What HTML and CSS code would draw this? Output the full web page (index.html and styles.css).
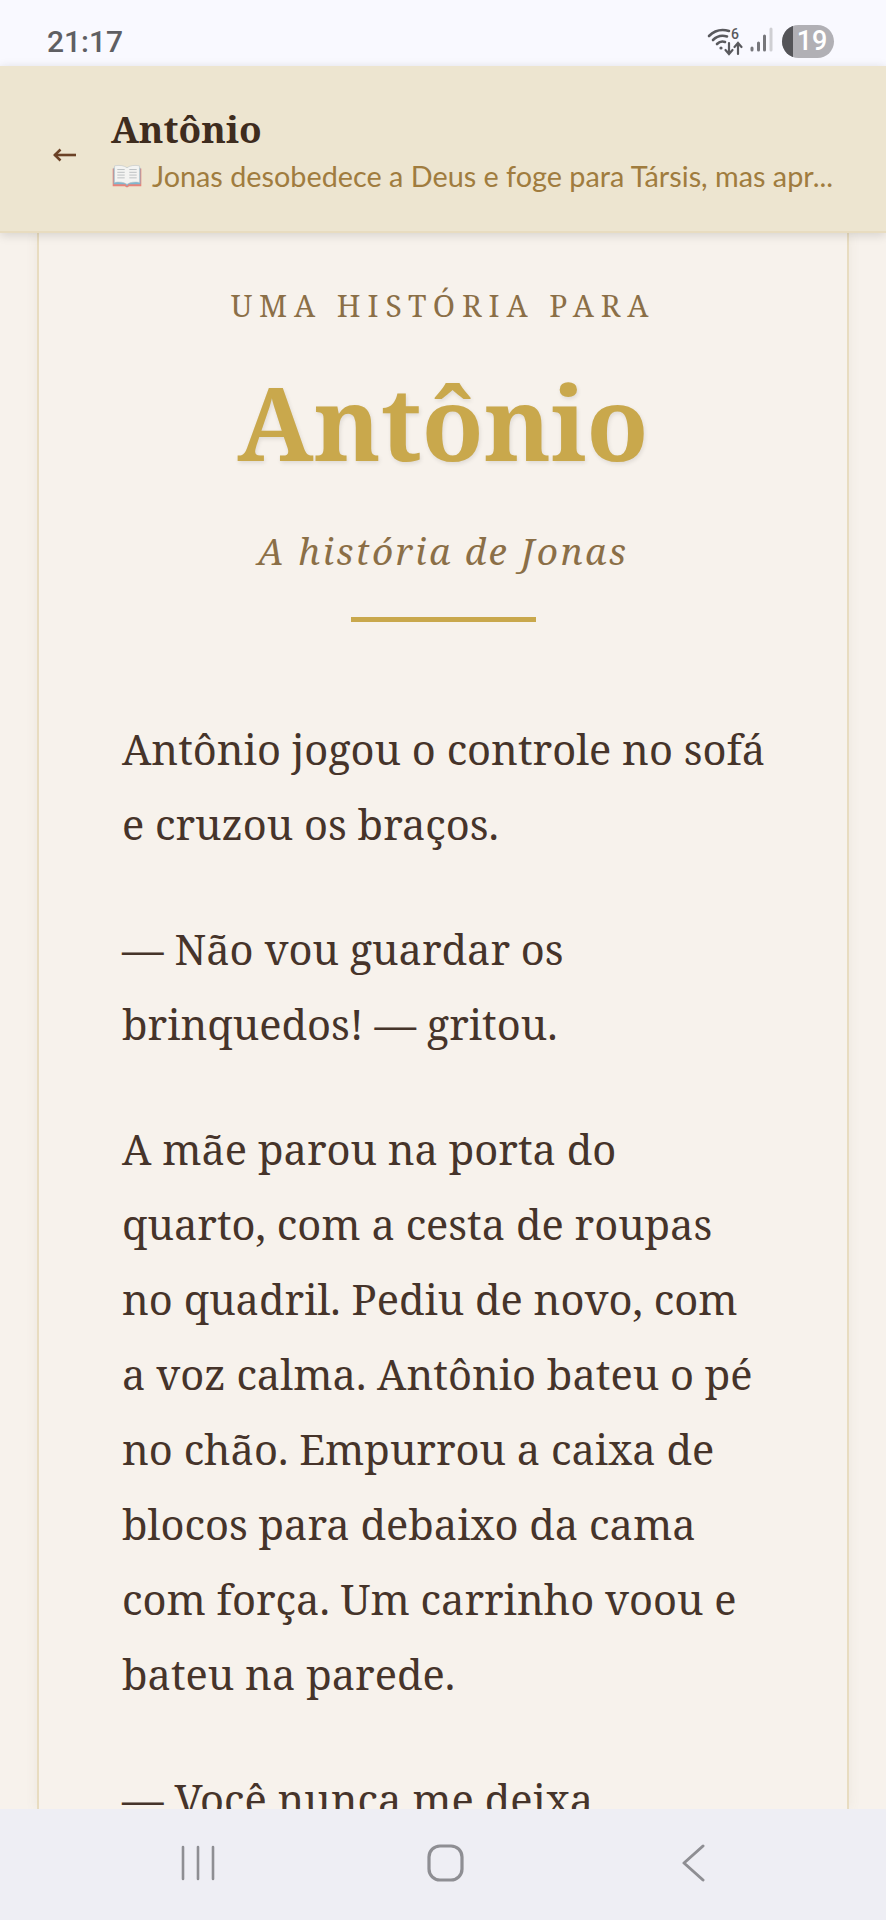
FILE: index.html
```html
<!DOCTYPE html>
<html lang="pt-BR">
<head>
    <meta charset="UTF-8">
    <meta name="viewport" content="width=device-width, initial-scale=1.0">
    <title>Antônio</title>
    <link rel="stylesheet" href="styles.css">
</head>
<body>
    <div class="phone">
        <div class="status-bar">
            <span class="clock">21:17</span>
            <div class="status-icons">
                <svg class="wifi-icon" width="38" height="30" viewBox="0 0 38 30" fill="none" stroke="#5a5a5e" stroke-linecap="round">
                    <path d="M2 10 C8 4 15 3 22 5" stroke-width="2.6"/>
                    <path d="M6 14 C10 10 15 9 20 10.500" stroke-width="2.6"/>
                    <path d="M10 18 C12 16 15 15 18 16" stroke-width="2.6"/>
                    <circle cx="14" cy="22" r="1.6" fill="#5a5a5e" stroke="none"/>
                    <path d="M22 17 V28 M18.500 24 L22 28 L25.500 24" stroke-width="2.2"/>
                    <path d="M31 28 V17 M27.500 21 L31 17 L34.500 21" stroke-width="2.2"/>
                </svg>
                <span class="wifi-six">6</span>
                <svg class="signal-icon" width="24" height="30" viewBox="0 0 24 30" fill="none" stroke-linecap="round" stroke-width="3">
                    <path d="M3 24 V22" stroke="#77777b"/>
                    <path d="M9.500 24 V17" stroke="#77777b"/>
                    <path d="M15.500 24 V10" stroke="#77777b"/>
                    <path d="M22 24 V3" stroke="#cfcfd3"/>
                </svg>
                <div class="battery"><span class="battery-level"></span><span class="battery-text">19</span></div>
            </div>
        </div>

        <header class="top-bar">
            <svg class="back-icon" width="23" height="16" viewBox="0 0 23 16" fill="none" stroke="#6b4226" stroke-width="2.600">
                <path d="M1.500 8 H23"/>
                <path d="M7.500 2.500 L1.800 8 L7.500 13.500"/>
            </svg>
            <div class="top-text">
                <h2>Antônio</h2>
                <p>
                    <svg class="book-icon" width="32" height="24" viewBox="0 0 33 26">
                        <path d="M1 5 V24 H14 L16.500 25.500 L19 24 H32 V5 Z" fill="#e8837a"/>
                        <path d="M2 4 V22 H15 L16.500 24 L18 22 H31 V4 Z" fill="#7fb7cf"/>
                        <path d="M3 2 C8 1 13 1.500 16.500 4 C20 1.500 25 1 30 2 V20 C25 19 20 19.500 16.500 22 C13 19.500 8 19 3 20 Z" fill="#f4f4f2" stroke="#bcc3c6" stroke-width=".6"/>
                        <path d="M6 6 H14 M6 9 H14 M6 12 H14 M6 15 H14 M19 6 H27 M19 9 H27 M19 12 H27 M19 15 H27" stroke="#b9bdbf" stroke-width="1"/>
                    </svg>
                    <span>Jonas desobedece a Deus e foge para Társis, mas apr...</span>
                </p>
            </div>
        </header>

        <main class="content">
            <article class="story-card">
                <div class="story-head">
                    <div class="kicker">UMA HISTÓRIA PARA</div>
                    <h1>Antônio</h1>
                    <div class="story-name">A história de Jonas</div>
                    <div class="divider"></div>
                </div>
                <p>Antônio jogou o controle no sofá e cruzou os braços.</p>
                <p>— Não vou guardar os brinquedos! — gritou.</p>
                <p>A mãe parou na porta do quarto, com a cesta de roupas no quadril. Pediu de novo, com a voz calma. Antônio bateu o pé no chão. Empurrou a caixa de blocos para debaixo da cama com força. Um carrinho voou e bateu na parede.</p>
                <p>— Você nunca me deixa</p>
            </article>
        </main>

        <nav class="nav-bar">
            <svg width="34" height="36" viewBox="0 0 34 36" fill="none" stroke="#8e8e93" stroke-width="2.600" stroke-linecap="round">
                <path d="M2 2 V34 M17 2 V34 M32 2 V34"/>
            </svg>
            <svg class="nav-home" width="37" height="38" viewBox="0 0 37 38" fill="none" stroke="#8e8e93" stroke-width="3.200">
                <rect x="2" y="2" width="33" height="34" rx="11"/>
            </svg>
            <svg width="23" height="38" viewBox="0 0 23 38" fill="none" stroke="#8e8e93" stroke-width="3" stroke-linecap="round" stroke-linejoin="round">
                <path d="M21 2 L2 19 L21 36"/>
            </svg>
        </nav>
    </div>
</body>
</html>
```

FILE: styles.css
```css
* {
    margin: 0;
    padding: 0;
    box-sizing: border-box;
}

body {
    background-color: #f7f2ec;
    font-family: 'Noto Serif', 'DejaVu Serif', serif;
}

.phone {
    display: flex;
    flex-direction: column;
    height: 1920px;
    overflow: hidden;
}

.status-bar {
    display: flex;
    justify-content: space-between;
    align-items: center;
    height: 66px;
    flex-shrink: 0;
    padding: 0 52px 0 47px;
    background-color: #f9f9ff;
}

.clock {
    margin-top: 17px;
    font-family: 'Roboto', sans-serif;
    font-size: 30px;
    font-weight: 500;
    color: #5f5f63;
}

.status-icons {
    display: flex;
    align-items: center;
    margin-top: 16px;
}

.wifi-six {
    width: 14px;
    margin: -14px 0 0 -14px;
    font-family: 'Roboto', sans-serif;
    font-size: 14px;
    font-weight: 500;
    color: #5a5a5e;
}

.signal-icon {
    margin-left: 4px;
}

.battery {
    display: flex;
    align-items: center;
    justify-content: center;
    position: relative;
    width: 52px;
    height: 33px;
    margin-left: 9px;
    border-radius: 17px;
    overflow: hidden;
    background-color: #b1b0b5;
}

.battery-level {
    position: absolute;
    left: 0;
    top: 0;
    bottom: 0;
    width: 11px;
    background-color: #545458;
}

.battery-text {
    margin-left: 8px;
    font-family: 'Roboto', sans-serif;
    font-size: 27px;
    font-weight: 500;
    color: #fff;
}

.top-bar {
    display: flex;
    align-items: center;
    position: relative;
    z-index: 10;
    height: 167px;
    flex-shrink: 0;
    padding: 0 10px 0 53px;
    background-color: #ede5d0;
    border-bottom: 2px solid #e8dcc0;
    box-shadow: 0 2px 10px rgba(0,0,0,0.14);
}

.back-icon {
    flex-shrink: 0;
    margin: 12px 35px 0 0;
}

.top-text {
    margin-top: 2px;
}

.top-text h2 {
    font-size: 37px;
    font-weight: 700;
    line-height: 50px;
    color: #3e2c1e;
}

.top-text p {
    display: flex;
    align-items: center;
    margin-top: 3px;
    font-family: 'Lato', sans-serif;
    font-size: 28.800px;
    line-height: 38px;
    white-space: nowrap;
    color: #a07c3e;
}

.book-icon {
    margin-right: 9px;
}

.content {
    flex: 1;
    min-height: 0;
    padding: 0 37px;
    overflow: hidden;
}

.story-card {
    height: 100%;
    padding: 0 78px 0 83px;
    background-color: #f7f2ec;
    border-left: 2px solid #e8dcc0;
    border-right: 2px solid #e8dcc0;
    box-shadow: 0 0 12px rgba(120,100,60,0.08);
}

.story-head {
    display: flex;
    flex-direction: column;
    align-items: center;
    margin: 0 -35px 90px -40px;
    padding-top: 53px;
}

.kicker {
    font-size: 30px;
    line-height: 40px;
    letter-spacing: 6.900px;
    color: #8b6f47;
}

h1 {
    margin-top: 29px;
    font-size: 101px;
    font-weight: 700;
    line-height: 134px;
    color: #c9a84c;
    text-shadow: 1px 2px 4px rgba(0,0,0,0.1);
}

.story-name {
    margin-top: 37px;
    font-size: 37px;
    font-style: italic;
    line-height: 50px;
    letter-spacing: 2.400px;
    color: #8b6f47;
}

.divider {
    width: 185px;
    height: 5px;
    margin-top: 41px;
    background-color: #c9a84c;
}

.story-card p {
    margin-bottom: 50px;
    font-size: 41.600px;
    line-height: 75px;
    color: #46342a;
}

.nav-bar {
    display: flex;
    align-items: center;
    gap: 212px;
    height: 111px;
    flex-shrink: 0;
    padding: 0 0 4px 181px;
    position: relative;
    z-index: 10;
    background-color: #eeeef4;
}

.nav-home {
    margin-right: 6px;
}
```
